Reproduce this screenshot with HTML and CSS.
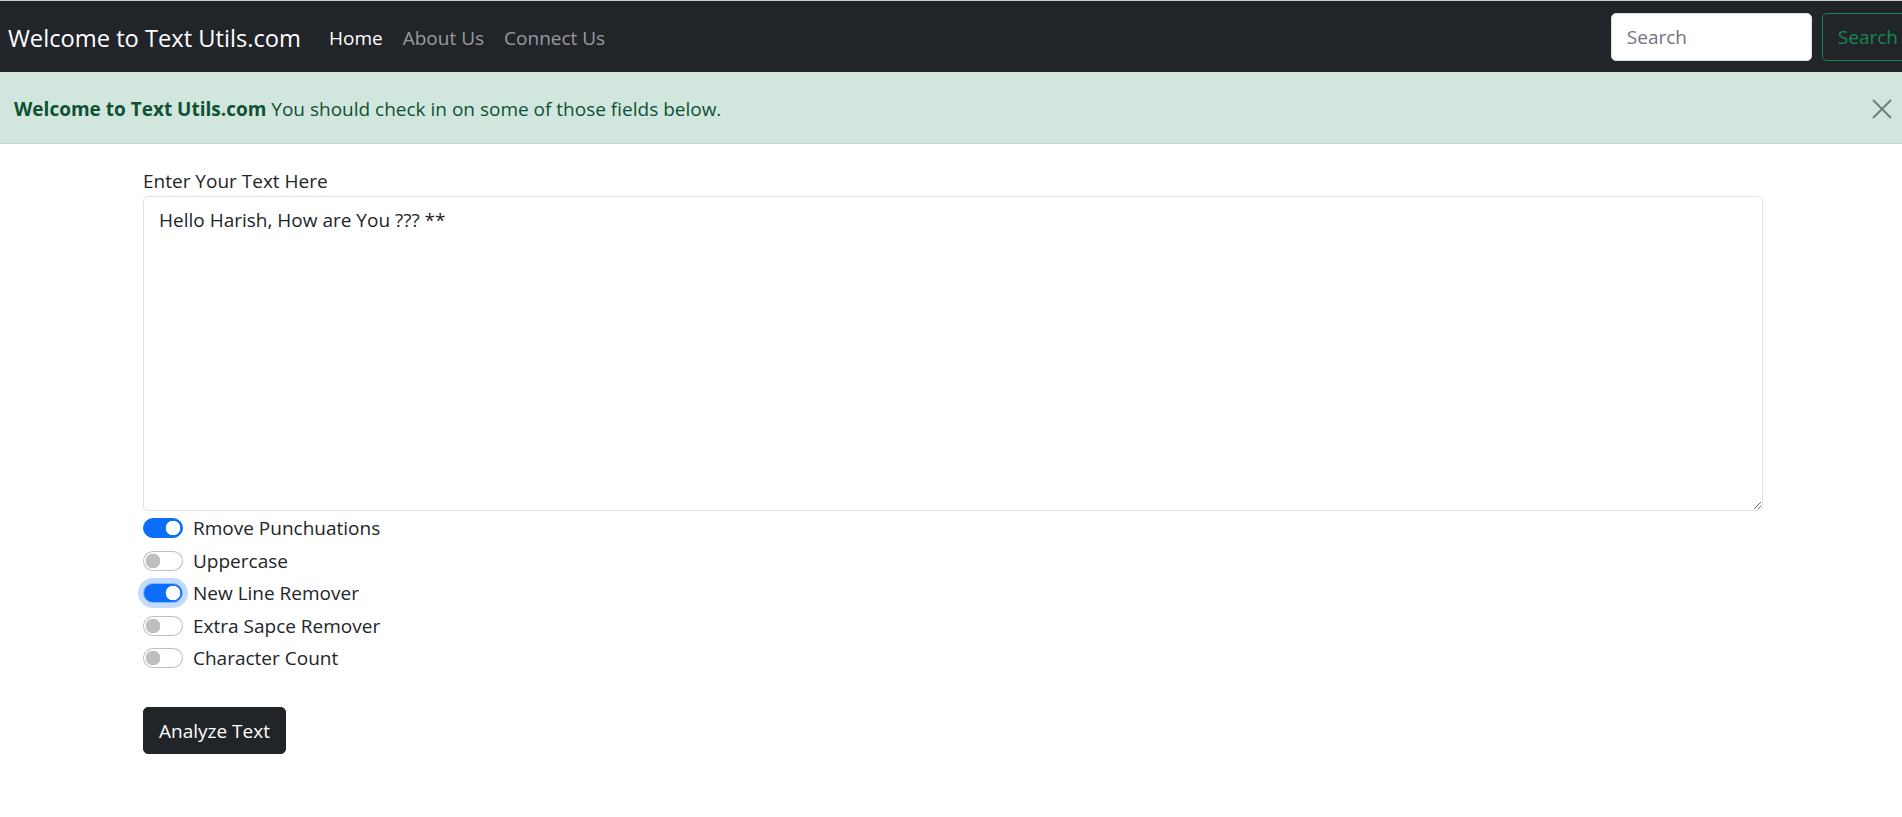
FILE: index.html
```html
<!DOCTYPE html>
<html lang="en">
<head>
<meta charset="utf-8">
<title>TextUtils - Home</title>
<link rel="stylesheet" href="styles.css">
</head>
<body>
<nav class="navbar">
  <a class="brand" href="#">Welcome to Text Utils.com</a>
  <ul class="nav-links">
    <li><a class="nav-link active" href="#">Home</a></li>
    <li><a class="nav-link" href="#">About Us</a></li>
    <li><a class="nav-link" href="#">Connect Us</a></li>
  </ul>
  <form class="search-form">
    <input class="search-input" type="search" placeholder="Search">
    <button class="search-btn" type="button">Search</button>
  </form>
</nav>
<div class="alert">
  <p class="alert-text"><strong>Welcome to Text Utils.com</strong> You should check in on some of those fields below.</p>
  <button class="alert-close" type="button" aria-label="Close">
    <svg viewBox="0 0 20 20" width="20" height="20"><path d="M1 1 L19 19 M19 1 L1 19" stroke="currentColor" stroke-width="2" fill="none"/></svg>
  </button>
</div>
<main class="container">
  <label class="form-label" for="myBox">Enter Your Text Here</label>
  <textarea class="form-control" id="myBox" rows="10">Hello Harish, How are You ??? **</textarea>
  <div class="switches">
    <label class="form-switch"><input class="switch" type="checkbox" checked><span>Rmove Punchuations</span></label>
    <label class="form-switch"><input class="switch" type="checkbox"><span>Uppercase</span></label>
    <label class="form-switch"><input class="switch focused" type="checkbox" checked><span>New Line Remover</span></label>
    <label class="form-switch"><input class="switch" type="checkbox"><span>Extra Sapce Remover</span></label>
    <label class="form-switch"><input class="switch" type="checkbox"><span>Character Count</span></label>
  </div>
  <button class="btn-dark" type="button">Analyze Text</button>
</main>
</body>
</html>
```
FILE: styles.css
```css
* { box-sizing: border-box; }
html, body { margin: 0; padding: 0; }
body {
  font-family: "Open Sans", "Noto Sans", sans-serif;
  font-size: 19px;
  line-height: 30px;
  color: #212529;
  background: #fff;
  overflow: hidden;
}
.navbar {
  display: flex;
  align-items: center;
  height: 72px;
  padding-top: 2px;
  background: #212529;
  border-top: 1px solid #c8c8c8;
  padding-left: 8px;
  overflow: hidden;
}
.brand {
  color: #fff;
  text-decoration: none;
  font-size: 23.7px;
  margin-right: 18px;
  white-space: nowrap;
}
.nav-links {
  display: flex;
  list-style: none;
  margin: 0;
  padding: 0;
}
.nav-link {
  display: block;
  padding: 0 10px;
  color: rgba(255,255,255,.55);
  text-decoration: none;
  white-space: nowrap;
}
.nav-link.active { color: #fff; }
.search-form {
  display: flex;
  margin-left: auto;
  margin-right: -12px;
  margin-top: -2px;
  flex-shrink: 0;
}
.search-input {
  width: 201px;
  height: 48px;
  margin-right: 10px;
  padding: 7px 15px;
  border: 1px solid #dee2e6;
  border-radius: 5px;
  font: inherit;
  color: #212529;
  background: #fff;
}
.search-input::placeholder { color: #6c757d; }
.search-btn {
  height: 48px;
  padding: 0 15px;
  border: 1px solid #198754;
  border-radius: 5px;
  background: transparent;
  color: #198754;
  font: inherit;
}
.alert {
  display: flex;
  align-items: center;
  height: 72px;
  padding: 2px 10px 0 14px;
  background: #d1e7dd;
  border-bottom: 1px solid #badbcc;
  color: #0f5132;
}
.alert-text { margin: 0; flex: 1; }
.alert-text strong { font-weight: 700; }
.alert-close {
  display: flex;
  border: 0;
  background: transparent;
  padding: 0;
  color: #6f7f77;
}
.container {
  width: 1620px;
  margin-left: 143px;
  padding-top: 22px;
}
.form-label { display: block; }
.form-control {
  display: block;
  width: 100%;
  height: 315px;
  padding: 7.5px 15px;
  border: 1px solid #dee2e6;
  border-radius: 5px;
  font: inherit;
  color: #212529;
  resize: vertical;
}
.switches {
  display: flex;
  flex-direction: column;
  gap: 2.5px;
  margin-top: 2px;
}
.form-switch {
  display: flex;
  align-items: center;
  gap: 10px;
}
.switch {
  appearance: none;
  -webkit-appearance: none;
  margin: 0;
  width: 40px;
  height: 20px;
  border: 1px solid rgba(0,0,0,.25);
  border-radius: 10px;
  background: #fff radial-gradient(circle, rgba(0,0,0,.25) 7px, transparent 7.6px) no-repeat left center / 18px 18px;
}
.switch:checked {
  background: #0d6efd radial-gradient(circle, #fff 7px, transparent 7.6px) no-repeat right center / 18px 18px;
  border-color: #0d6efd;
}
.switch.focused {
  box-shadow: 0 0 0 5px rgba(13,110,253,.25);
  border-color: #86b7fe;
}
.btn-dark {
  margin-top: 34px;
  height: 47px;
  padding: 0 15px;
  border: 1px solid #212529;
  border-radius: 5px;
  background: #212529;
  color: #fff;
  font: inherit;
}
```
